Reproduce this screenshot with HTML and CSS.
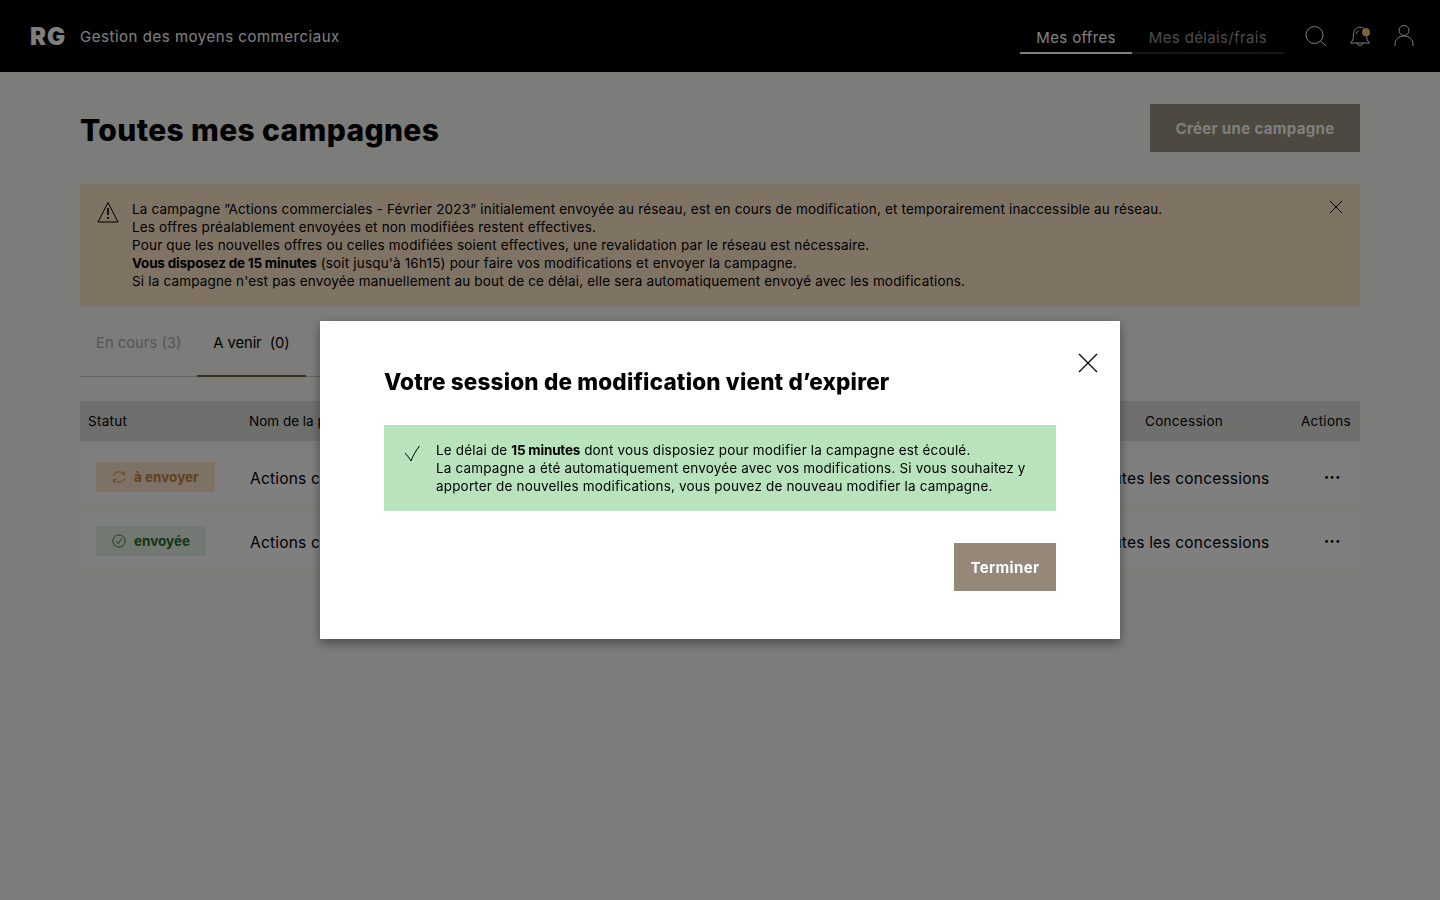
FILE: index.html
```html
<!DOCTYPE html>
<html lang="fr">
<head>
  <meta charset="UTF-8">
  <meta name="viewport" content="width=device-width, initial-scale=1.0">
  <title>Gestion des moyens commerciaux</title>
  <link rel="stylesheet" href="styles.css">
</head>
<body>
  <!-- Header -->
  <div class="header">
    <div class="brand">
      <strong class="logo">RG</strong>
      <span class="app-name">Gestion des moyens commerciaux</span>
    </div>
    <div class="header-right">
      <div class="nav">
        <a class="nav-item active">Mes offres</a>
        <a class="nav-item">Mes délais/frais</a>
      </div>
      <div class="header-icons">
        <svg class="icon-24" viewBox="0 0 24 24"><circle cx="10.500" cy="11" r="8.500"/><path d="M16.500 17 L22 22"/></svg>
        <svg class="icon-24" viewBox="0 0 24 24"><path d="M2.500 19 C4.500 17 5.500 15 5.500 11 C5.500 6 8 3.200 12 3.200 C16 3.200 18.500 6 18.500 11 C18.500 15 19.500 17 21.500 19 Z"/><path d="M9.500 19 C9.500 22.500 14.500 22.500 14.500 19"/><path d="M8.500 10 C8.700 8.200 9.300 7 10.500 6.300"/><circle class="bell-dot" cx="18" cy="8.300" r="4"/></svg>
        <svg class="icon-24" viewBox="0 0 24 24"><circle cx="12" cy="6.500" r="5"/><path d="M3 22 V20 C3 15.500 7 12 12 12 C17 12 21 15.500 21 20 V22"/></svg>
      </div>
    </div>
  </div>

  <div class="content">
    <div class="title-row">
      <h1>Toutes mes campagnes</h1>
      <button class="btn-dark">Créer une campagne</button>
    </div>

    <div class="alert alert-warning">
      <svg class="icon-24" viewBox="0 0 24 24"><path d="M12 2.500 L22 22 H2 Z"/><path class="mark" d="M12 8 V15"/><path class="mark" d="M12 17 V19"/></svg>
      <div class="alert-text">
        La campagne ”Actions commerciales - Février 2023” initialement envoyée au réseau, est en cours de modification, et temporairement inaccessible au réseau.<br>
        Les offres préalablement envoyées et non modifiées restent effectives.<br>
        Pour que les nouvelles offres ou celles modifiées soient effectives, une revalidation par le réseau est nécessaire.<br>
        <strong>Vous disposez de 15 minutes</strong> (soit jusqu'à 16h15) pour faire vos modifications et envoyer la campagne.<br>
        Si la campagne n'est pas envoyée manuellement au bout de ce délai, elle sera automatiquement envoyé avec les modifications.
      </div>
      <svg class="alert-close" viewBox="0 0 14 14"><path d="M1 1 L13 13 M13 1 L1 13"/></svg>
    </div>

    <div class="tabs">
      <div class="tab">En cours (3)</div>
      <div class="tab active">A venir&nbsp; (0)</div>
    </div>

    <div class="table-head">
      <span class="head-statut">Statut</span>
      <span class="head-nom">Nom de la p</span>
      <span class="head-concession">Concession</span>
      <span class="head-actions">Actions</span>
    </div>

    <div class="table-row">
      <div class="col-statut">
        <span class="badge badge-orange">
          <svg viewBox="0 0 16 16"><path d="M1.500 6.500 C3 1.500 10.500 0.500 14 4.500"/><path d="M14.500 9.500 C13 14.500 5.500 15.500 2 11.500"/><path d="M14.200 1.500 V5 H11"/><path d="M1.800 14.500 V11 H5"/></svg>
          à envoyer
        </span>
      </div>
      <div class="col-nom">Actions c</div>
      <div class="col-concession">Toutes les concessions</div>
      <div class="col-actions">•••</div>
    </div>

    <div class="table-row">
      <div class="col-statut">
        <span class="badge badge-green">
          <svg viewBox="0 0 16 16"><circle cx="8" cy="8" r="7"/><path d="M4.800 8 L7.200 11 L11.200 4.800"/></svg>
          envoyée
        </span>
      </div>
      <div class="col-nom">Actions c</div>
      <div class="col-concession">Toutes les concessions</div>
      <div class="col-actions">•••</div>
    </div>
  </div>

  <!-- Modal -->
  <div class="overlay">
    <div class="modal">
      <svg class="modal-close" viewBox="0 0 20 20"><path d="M1 1 L19 19 M19 1 L1 19"/></svg>
      <h2>Votre session de modification vient d’expirer</h2>
      <div class="alert alert-success">
        <svg class="icon-24" viewBox="0 0 24 24"><path d="M5 12 C7 14.500 9.500 17 11 20 C13 14.500 16 9.500 19.500 5"/></svg>
        <div class="alert-text">
          Le délai de <strong>15 minutes</strong> dont vous disposiez pour modifier la campagne est écoulé.<br>
          La campagne a été automatiquement envoyée avec vos modifications. Si vous souhaitez y<br>
          apporter de nouvelles modifications, vous pouvez de nouveau modifier la campagne.
        </div>
      </div>
      <div class="modal-footer">
        <button class="btn-taupe">Terminer</button>
      </div>
    </div>
  </div>
</body>
</html>
```

FILE: styles.css
```css
body {
  margin: 0;
  min-height: 100vh;
  font-family: Inter, "Noto Sans", sans-serif;
  color: #000;
  background-color: #f8f8f4;
}

svg {
  fill: none;
  stroke: currentColor;
  stroke-width: 1;
}

.icon-24 {
  width: 24px;
  height: 24px;
  flex-shrink: 0;
}

/* Header */
.header {
  display: flex;
  align-items: center;
  justify-content: space-between;
  height: 72px;
  padding: 0 24px 0 30px;
  background-color: #000;
  color: #fff;
}

.brand {
  display: flex;
  align-items: center;
}

.logo {
  width: 50px;
  font-size: 24px;
  font-weight: 900;
  letter-spacing: 1px;
}

.app-name {
  font-size: 15px;
  letter-spacing: 0.53px;
}

.header-right {
  display: flex;
  align-items: center;
}

.nav {
  display: flex;
  margin-right: 20px;
  padding-top: 2px;
}

.nav-item {
  padding: 0 16px;
  height: 33px;
  line-height: 34px;
  font-size: 15px;
  letter-spacing: 0.35px;
  color: #999;
  border-bottom: 2px solid #3a2c20;
  box-sizing: border-box;
}

.nav-item + .nav-item {
  padding: 0 17px;
}

.nav-item.active {
  color: #fff;
  border-bottom-color: #fff;
}

.header-icons {
  display: flex;
  gap: 20px;
}

.bell-dot {
  fill: #ffc583;
  stroke: none;
}

/* Content */
.content {
  padding: 32px 80px;
}

.title-row {
  display: flex;
  align-items: center;
  justify-content: space-between;
}

h1 {
  margin: 0;
  padding-top: 4px;
  font-size: 30px;
  font-weight: 800;
  letter-spacing: 0.35px;
}

.btn-dark,
.btn-taupe {
  height: 48px;
  padding: 0 16px;
  border: none;
  color: #fff;
  font-family: inherit;
  font-size: 15px;
  font-weight: 700;
  letter-spacing: 0.34px;
}

.btn-dark {
  width: 210px;
  background-color: #9a9080;
}

.btn-taupe {
  width: 102px;
  background-color: #968879;
}

.alert {
  display: flex;
  gap: 12px;
  padding: 16px;
  font-size: 13.5px;
  line-height: 18px;
  letter-spacing: 0.17px;
}

.alert strong {
  letter-spacing: -0.2px;
}

.alert .mark {
  stroke-width: 1.6;
}

.alert-warning {
  position: relative;
  margin-top: 32px;
  background-color: #fee6c8;
}

.alert-success {
  background-color: #b9e3bc;
}

.alert-close {
  position: absolute;
  top: 16px;
  right: 17px;
  width: 14px;
  height: 14px;
}

.tabs {
  display: flex;
  width: 400px;
  margin-top: 16px;
  border-bottom: 1px solid #c8c8c6;
}

.tab {
  height: 54px;
  padding: 0 16px;
  line-height: 42px;
  font-size: 14.8px;
  color: #aaa;
  box-sizing: border-box;
}

.tab.active {
  color: #000;
  letter-spacing: -0.1px;
  border-bottom: 2px solid #7d5a36;
  margin-bottom: -1px;
  height: 55px;
}

.table-head {
  display: flex;
  align-items: center;
  height: 40px;
  margin-top: 24px;
  padding: 0 8px;
  background-color: #dededa;
  font-size: 13.5px;
  letter-spacing: 0.3px;
}

.head-statut { width: 161px; }
.head-nom { width: 896px; letter-spacing: 0; }
.head-concession { width: 156px; }

.table-row {
  display: flex;
  align-items: center;
  height: 56px;
  margin-top: 8px;
  background-color: #fff;
  font-size: 15.5px;
  letter-spacing: 0.2px;
}

.col-statut {
  width: 170px;
  padding-left: 16px;
  box-sizing: border-box;
}

.col-nom {
  width: 70px;
  margin-right: 774px;
  padding-top: 2px;
  white-space: nowrap;
}

.col-concession {
  width: 230px;
  padding-top: 2px;
  box-sizing: border-box;
}

.col-actions {
  padding-bottom: 2px;
  font-size: 9px;
  letter-spacing: 0.5px;
}

.badge {
  display: inline-flex;
  align-items: center;
  gap: 8px;
  height: 30px;
  padding: 0 16px;
  font-size: 13.5px;
  font-weight: 700;
  letter-spacing: 0;
}

.badge svg {
  width: 14px;
  height: 14px;
}

.badge-orange {
  background-color: #fde3cb;
  color: #bd8440;
}

.badge-green {
  background-color: #e4f2e4;
  color: #2a6a2c;
}

/* Modal */
.overlay {
  position: fixed;
  top: 0;
  left: 0;
  right: 0;
  bottom: 0;
  display: flex;
  justify-content: center;
  align-items: flex-start;
  padding-top: 321px;
  box-sizing: border-box;
  background-color: rgba(0, 0, 0, 0.5);
}

.modal {
  position: relative;
  width: 800px;
  padding: 45px 64px 48px;
  box-sizing: border-box;
  background-color: #fff;
  box-shadow: 0 4px 10px rgba(0, 0, 0, 0.4);
}

.modal-close {
  position: absolute;
  top: 32px;
  right: 22px;
  width: 20px;
  height: 20px;
  stroke-width: 1.2;
}

h2 {
  margin: 0 0 27px;
  font-size: 22.5px;
  line-height: 32px;
  font-weight: 800;
  letter-spacing: 0.18px;
}

.modal-footer {
  display: flex;
  justify-content: flex-end;
  margin-top: 32px;
}
```
